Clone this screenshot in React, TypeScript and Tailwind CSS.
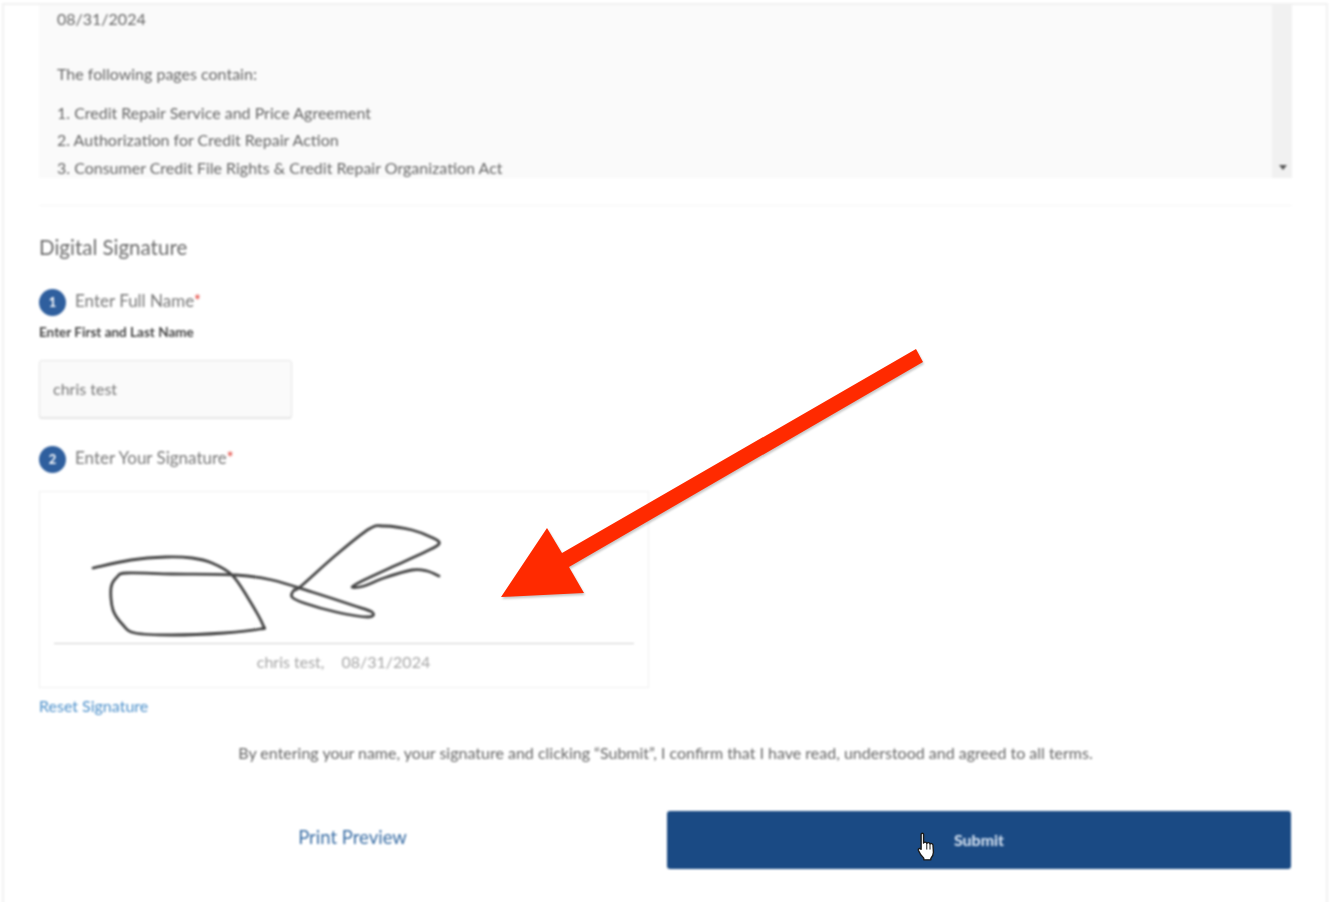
const SIGNATURE: [number, number][] = [
  [92, 568], [130, 560], [165, 557], [191, 558], [211, 563], [231, 575], [247, 598], [262, 625], [259, 629], [223, 633], [171, 635], [134, 633],
  [122, 625], [112, 610], [110, 588], [116, 577], [126, 573], [171, 574], [235, 575], [271, 580], [311, 592], [351, 605], [371, 612], [367, 617],
  [335, 612], [303, 603], [291, 597], [293, 590], [299, 587], [335, 555], [368, 529], [383, 526], [411, 530], [432, 538], [438, 544], [424, 552],
  [391, 567], [363, 580], [351, 587], [363, 586], [383, 578], [411, 570], [426, 571], [438, 576],
];

function smoothPath(p: [number, number][]) {
  let d = `M${p[0][0]} ${p[0][1]}`;
  for (let i = 0; i < p.length - 1; i++) {
    const a = p[Math.max(i - 1, 0)];
    const b = p[i];
    const c = p[i + 1];
    const e = p[Math.min(i + 2, p.length - 1)];
    d += `C${b[0] + (c[0] - a[0]) / 6} ${b[1] + (c[1] - a[1]) / 6} ${c[0] - (e[0] - b[0]) / 6} ${c[1] - (e[1] - b[1]) / 6} ${c[0]} ${c[1]}`;
  }
  return d;
}

export default function App() {
  return (
    <div className="relative w-[1330px] h-[902px] overflow-hidden bg-white font-['Lato','Liberation_Sans',sans-serif]">
      <div className="h-full blur-[0.9px]">
        <div className="h-full mx-[2px] mt-[3px] border-t-2 border-x-2 border-[#f1f1f1] pl-[35px] pr-[35px]">
          <div className="relative h-[173px] w-[1253px] overflow-hidden bg-[#fafafa] pl-[18px] text-[16px] text-[#666]">
            <div className="absolute right-0 top-0 bottom-0 w-[20px] bg-[#f1f1f1]">
              <div className="absolute left-[7px] bottom-[8px] w-0 h-0 border-x-[4px] border-x-transparent border-t-[5px] border-t-[#555]" />
            </div>
            <p className="mt-[3px] h-[22px] leading-[22px]">08/31/2024</p>
            <p className="mt-[33px] h-[22px] leading-[22px]">The following pages contain:</p>
            <p className="mt-[17px] h-[22px] leading-[22px]">1. Credit Repair Service and Price Agreement</p>
            <p className="mt-[5px] h-[22px] leading-[22px]">2. Authorization for Credit Repair Action</p>
            <p className="mt-[6px] h-[22px] leading-[22px]">3. Consumer Credit File Rights &amp; Credit Repair Organization Act</p>
          </div>
          <div className="mt-[27px] h-px w-[1253px] bg-[#f6f6f6]" />
          <h2 className="mt-[27px] h-[28px] text-[20.5px] leading-[28px] text-[#6b6b6b]">Digital Signature</h2>
          <div className="mt-[28px] flex h-[27px] items-center gap-[9px]">
            <span className="flex h-[27px] w-[27px] items-center justify-center rounded-full bg-[#2f5f9e] text-[13px] font-bold text-white">1</span>
            <span className="-mt-[3px] text-[17px] text-[#777]">Enter Full Name<span className="text-[#e0352b]">*</span></span>
          </div>
          <p className="mt-[8px] h-[16px] text-[13.5px] font-bold leading-[16px] text-[#444]">Enter First and Last Name</p>
          <div className="mt-[20px] flex h-[58px] w-[253px] items-center rounded-[3px] border border-[#e6e6e6] bg-[#fafafa] pl-[13px] text-[16px] text-[#777] shadow-[0_1px_1px_rgba(0,0,0,0.1)]">chris test</div>
          <div className="mt-[28px] flex h-[27px] items-center gap-[9px]">
            <span className="flex h-[27px] w-[27px] items-center justify-center rounded-full bg-[#2f5f9e] text-[13px] font-bold text-white">2</span>
            <span className="-mt-[3px] text-[17px] text-[#777]">Enter Your Signature<span className="text-[#e0352b]">*</span></span>
          </div>
          <div className="relative mt-[18px] h-[197px] w-[610px] border border-[#f0f0f0] px-[14px]">
            <svg className="absolute left-0 top-0" width="610" height="196" viewBox="39 492 610 196" fill="none">
              <path d={smoothPath(SIGNATURE)} stroke="#444" strokeWidth="2.8" strokeLinecap="round" strokeLinejoin="round" />
            </svg>
            <div className="mt-[151px] h-px w-[580px] bg-[#cfcfcf]" />
            <p className="mt-[8px] h-[20px] pr-[1px] text-center text-[16px] leading-[20px] text-[#a6a6a6]">
              <span>chris test,</span>
              <span className="ml-[17px]">08/31/2024</span>
            </p>
          </div>
          <a className="mt-[8px] block h-[20px] text-[16px] leading-[20px] text-[#4b8fca]">Reset Signature</a>
          <p className="mt-[27px] h-[20px] w-[1253px] text-center text-[16px] leading-[20px] text-[#666]">
            By entering your name, your signature and clicking “Submit”, I confirm that I have read, understood and agreed to all terms.
          </p>
          <div className="mt-[48px] flex w-[1253px] items-start">
            <a className="mt-[13px] w-[628px] pr-px text-center text-[18.5px] leading-[26px] text-[#3a6ea5]">Print Preview</a>
            <button className="flex h-[58px] w-[624px] items-center justify-center rounded-[3px] bg-[#1a4a84] text-[16px] font-bold text-[#dbe7f5]">Submit</button>
          </div>
        </div>
      </div>

      <svg className="absolute left-[495px] top-[340px]" width="440" height="270" viewBox="495 340 440 270" style={{ filter: "drop-shadow(1px 2px 1px rgba(0,0,0,0.22))" }}>
        <polygon points="501,597 547,528 562,553 916,349 923,362 569,567 584,593" fill="#ff2a00" />
      </svg>

      <svg className="absolute left-[915px] top-[832px]" width="24" height="30" viewBox="0 0 22 28">
        <path
          d="M5.5 2.2c0-1.4 2.3-1.4 2.3 0v8.2c.4-1.3 2.8-1.2 3 .2.5-1 2.7-.9 3 .5.8-.7 2.6-.3 2.8 1.1l.4 6.8c0 2.6-1.2 4.3-2.4 5.6v1.4H8v-1.4c-1.4-1.4-3.4-3.6-5-7.4-.6-1.6 1-2.5 2.5-1z"
          fill="#fff"
          stroke="#1a1a1a"
          strokeWidth="1.3"
          strokeLinejoin="round"
        />
        <path d="M10.8 11v5M13.8 11.4v4.6" stroke="#1a1a1a" strokeWidth="0.9" strokeLinecap="round" />
      </svg>
    </div>
  );
}
